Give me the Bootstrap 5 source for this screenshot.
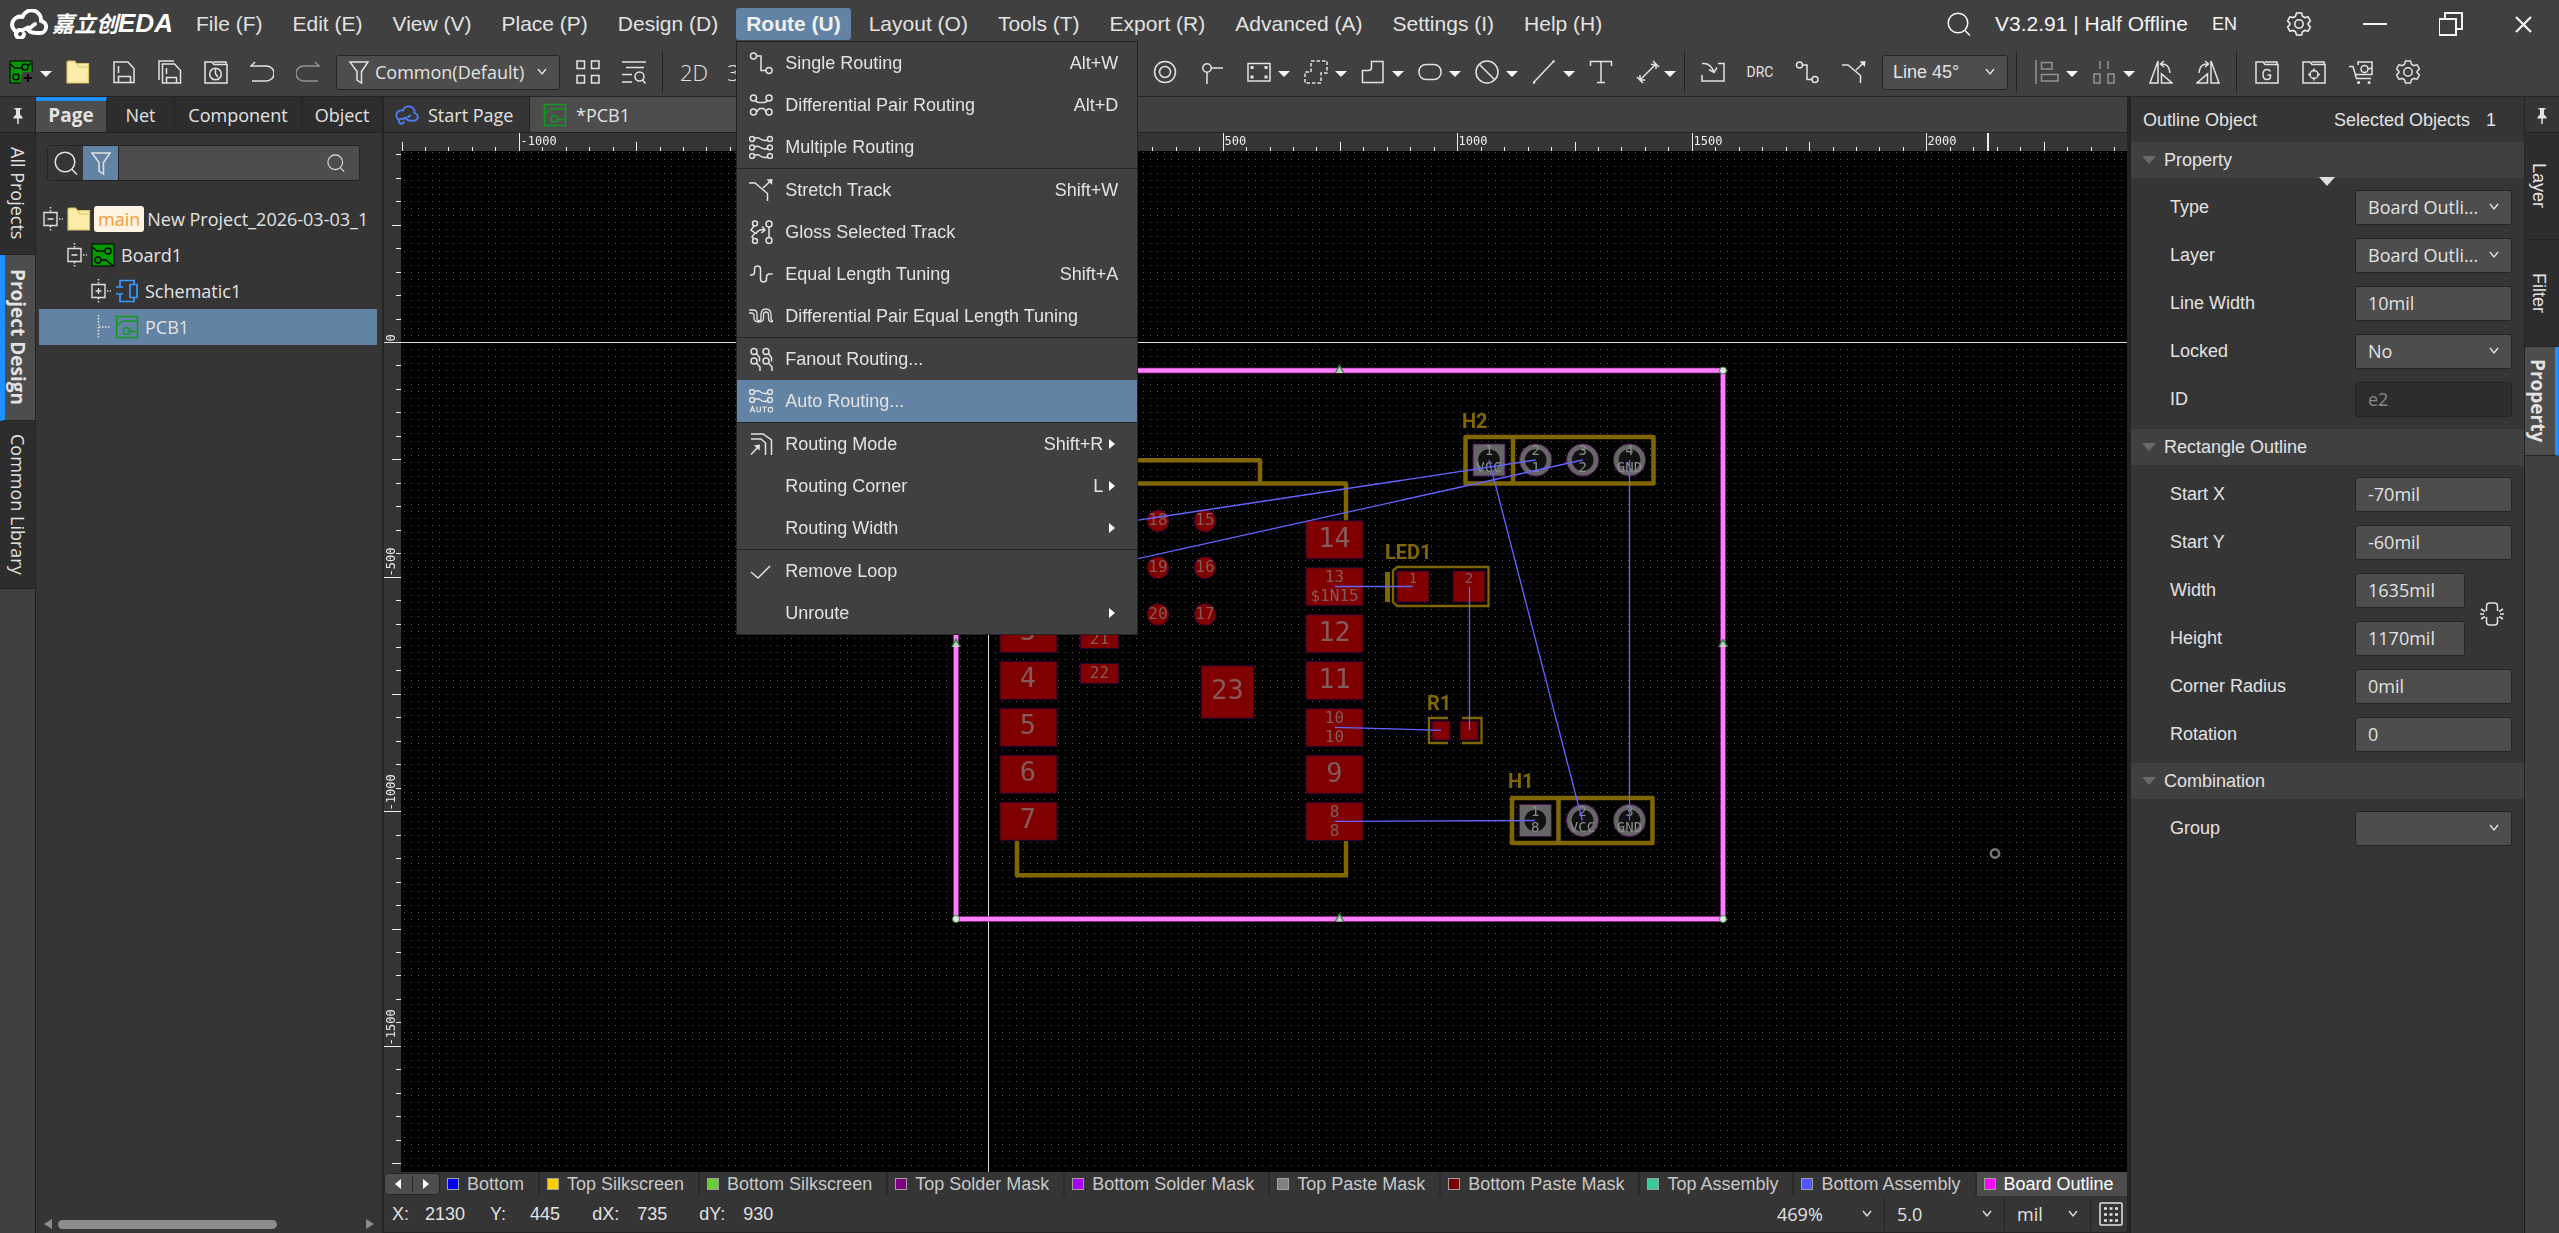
<!DOCTYPE html>
<html lang="en" data-bs-theme="dark">
<head>
<meta charset="utf-8">
<meta name="viewport" content="width=device-width, initial-scale=1">
<title>PCB1 - EDA</title>
<link href="https://cdn.jsdelivr.net/npm/bootstrap@5.3.0/dist/css/bootstrap.min.css" rel="stylesheet">
<script src="https://cdn.jsdelivr.net/npm/bootstrap@5.3.0/dist/js/bootstrap.bundle.min.js"></script>
<style>
:root{--bar:#404040;--panel:#353535;--deep:#2d2d2d;--field:#4d4d4d;--edge:#242424;--ink:#e2e2e2;--hot:#6283a3;--blue:#1e90ff;
  --arial:"Liberation Sans",Arial,sans-serif;--hum:"Open Sans","Noto Sans",sans-serif}
body{height:100vh;overflow:hidden;background:var(--panel);color:var(--ink);font:18px/24px var(--arial)}
button,input,select{font:inherit;color:inherit}
button{background:none;border:0;padding:0}
.hum{font-family:var(--hum)}
.ico{width:24px;height:24px;flex:none;fill:none;stroke:currentColor;stroke-width:1.5;display:block}
.dim{opacity:.5}
/* title bar */
.titlebar{height:48px;background:var(--bar)}
.brand{width:184px;padding-left:10px;color:#fff}
.brand svg{width:38px;height:30px;fill:none;stroke:#fff;stroke-width:4;stroke-linecap:round;stroke-linejoin:round}
.brand span{font:italic 700 22px/30px var(--arial),"Noto Sans CJK SC",sans-serif;margin-left:4px;white-space:nowrap}
.brand b{font-size:26px}
.mainmenu{gap:6px;font-size:21px}
.mainmenu .entry{height:32px;padding:0 12px;border-radius:3px;white-space:nowrap;line-height:32px;display:block}
.mainmenu .entry.on{background:var(--hot);font-weight:700;padding:0 10px;color:#f0f0f0}
.winbar{font-size:21px;color:#f4f4f4}
.winbar .lang{font-size:18px;margin:0 50px 0 24px}
/* route menu */
.routemenu{--bs-dropdown-padding-y:0;top:33px;left:0;width:402px;background:var(--bar);border:1px solid var(--edge);border-radius:0;font-size:18px;color:var(--ink);padding:0}
.routemenu button{height:42px;width:100%;padding:0 19px 0 12px;gap:12px;text-align:left}
.routemenu button.on{background:var(--hot)}
.routemenu hr{margin:0;border-top:1px solid var(--edge);opacity:1}
.routemenu kbd{font:inherit;color:inherit;background:none;padding:0;margin-left:auto}
.sub::after{content:"";border:5px solid transparent;border-left:6px solid #fff;border-right:0;margin:0 3px 0 -6px}
/* toolbar */
.toolbar{height:49px;background:var(--bar);border-bottom:1px solid var(--edge)}
.toolbar .tools-a{width:1153px;padding-left:9px}
.tool{margin-right:23px}
.tools-a .tool{margin-right:22px}
.tool.drop,.tools-a .tool.drop{margin-right:14px;display:flex;align-items:center;gap:7px}
.drop::after{content:"";border:6px solid transparent;border-top:6px solid #f4f4f4;border-bottom:0;margin-top:4px}
.rule{width:1px;height:42px;background:var(--edge);flex:none}
.rule.wide{margin-right:18px}
.pick{appearance:none;background:var(--field) url("data:image/svg+xml,%3Csvg xmlns='http://www.w3.org/2000/svg' width='10' height='8' fill='none' stroke='%23e2e2e2' stroke-width='1.4'%3E%3Cpath d='M1 1l4 5 4-5'/%3E%3C/svg%3E") no-repeat right 12px center;border:1px solid var(--edge);border-radius:3px;height:35px;padding:0 24px 0 10px}
.scope{width:224px}
.corner{width:126px}
.twod{font:300 22px/24px var(--hum);width:24px;margin:0 20px 0 3px;display:flex;justify-content:center}
.drc{font:14px/24px Roboto,sans-serif;width:24px;display:flex;justify-content:center}
/* strips and tabs */
.strip{width:36px;background:var(--bar);border-right:1px solid var(--edge);flex:none}
.strip.right{width:35px;border-right:0;border-left:1px solid var(--edge)}
.pin{height:36px;background:var(--panel);border-bottom:1px solid var(--edge)}
.vtab{writing-mode:vertical-rl;background:var(--deep);border-bottom:1px solid var(--edge);display:flex;align-items:center;justify-content:center;width:100%;white-space:nowrap}
.vtab.on{background:var(--field);font-weight:700;font-size:19px;border-left:5px solid var(--blue);padding-right:5px}
.right .vtab{padding-right:7px}
.right .vtab.on{border-left:0;border-right:4px solid var(--blue);padding-right:5px}
.h-a{height:122px}.h-b{height:166px}.h-c{height:168px}.h-d{height:107px}.h-e{height:109px}
.tabrow{height:36px;border-bottom:1px solid var(--edge);background:var(--bar)}
.ptab{background:var(--deep);border-right:1px solid var(--edge);height:100%;flex:none}
.ptab.on{background:var(--field);border-top:4px solid var(--blue);font-weight:700;font-size:19px;padding-bottom:4px}
.w-a{width:71px}.w-b{width:68px}.w-c{width:127px}
.leftpanel{width:348px;border-right:2px solid var(--edge);flex:none}
.seek{margin:12px 22px 0 11px;height:36px;border:1px solid var(--edge);border-radius:3px;background:var(--field)}
.seek button{width:35px;flex:none;display:grid;place-items:center}
.seek button.go{width:46px}
.seek .go .ico{width:18px;height:18px}
.seek .plain{background:var(--panel)}
.seek .lit{background:var(--hot)}
.seek input{background:none;border:0;border-left:1px solid var(--edge);min-width:0;outline:0}
.tree{margin:20px 5px 0 3px}
.node{height:36px;white-space:nowrap;gap:6px}
.node.on{background:var(--hot)}
.node.n1{padding-left:4px;gap:0}.node.n2{padding-left:28px}.node.n3{padding-left:52px}
.node .exp{margin:0 4px 0 -4px}
.branch{background:#fff3e3;color:#ff9a33;border-radius:3px;height:26px;padding:0 4px;margin:0 3px 0 3px}
.hbar{height:9px;background:#8c8c8c;border-radius:5px;width:219px;margin:0 89px 0 6px}
.tri{border:5px solid transparent;border-right:8px solid #8c8c8c;border-left:0}
.tri.r{border-right:0;border-left:8px solid #8c8c8c}
/* centre */
.doctab{border-right:1px solid var(--edge);height:100%;background:var(--panel);gap:9px;padding:0 11px;width:146px;flex:none}
.doctab.on{background:var(--field);width:260px;padding-left:13px}
.doctab .home{color:#4d7df0;stroke-width:3}
.board,main,.centre{min-height:0;min-width:0}
.board canvas{position:absolute;inset:0}
.board svg{position:relative;display:block;width:100%;height:100%}
.layers{height:24px;overflow:hidden}
.layertab{height:24px;gap:8px;padding:0 14px 0 7px;border-right:2px solid #2a2a2a;color:#c8c8c8;white-space:nowrap}
.layertab i{width:12px;height:12px;border:1px solid #a0a0a0}
.layertab.on{background:var(--field);color:#fff;padding-right:11px;border:0}
.navpair{width:56px;height:22px;border:1px solid var(--edge);border-radius:4px;background:var(--field);flex:none}
.navpair .rule{height:16px}
.status{height:36px;border-bottom:1px solid var(--edge);box-sizing:content-box}
.status dl{margin:0;font-size:18px}
.status dt{font-weight:400}.status dd{margin:0 32px 0 18px}
.status .first{margin:0 25px 0 16px}
.status .second{margin-left:24px}
.status .pick{background-color:transparent;border:0;border-right:1px solid var(--edge);border-radius:0;padding:0 0 0 12px;height:33px;width:120px}
.status .pick.unit{width:86px}
/* property panel */
.props{width:397px;border-left:4px solid var(--edge);flex:none}
.prophead{height:45px;padding:0 28px 0 12px}
.section{height:36px;background:var(--bar);padding-left:11px;gap:8px}
.section::before{content:"";border:7px solid transparent;border-top:8px solid #6a6a6a;border-bottom:0}
.rows{padding:5px 12px 5px 39px}
.rows.first{padding-bottom:6px}
.rowline{height:48px;display:flex;align-items:center;justify-content:space-between}
.rowline .val{width:157px;height:35px;background-color:var(--field);border:1px solid var(--edge);border-radius:3px;padding:0 12px;font-family:var(--hum);outline:0}
.rowline .val:disabled{background-color:var(--deep);color:#8a8a8a;opacity:1}
.pairrow .val{width:110px}
.pairrow .ico{margin:0 8px 0 15px}
.nub{left:188px;top:35px;border:8px solid transparent;border-top:9px solid #ddd;border-bottom:0}
/* board drawing */
.rt{font:12px "DejaVu Sans Mono",monospace;fill:#eee}
.pad{fill:#800000;stroke:#2b0035;stroke-width:1}
.big,.sml,.hol{font-family:"DejaVu Sans Mono",monospace;fill:#845a5a;text-anchor:middle;stroke:none}
.big{font-size:27px}.sml{font-size:16px}.hol{font-size:14px;fill:#8c8c8c}
.sml.mini{font-size:14px}
.silk{fill:none;stroke:#806600;stroke-width:4.5;stroke-linejoin:round;stroke-linecap:round}
.thin{stroke-width:2.3;stroke-linejoin:miter;stroke-linecap:butt}
.ref{font:700 20px Roboto,sans-serif;fill:#806600}
.th{fill:#666;stroke:#48104f;stroke-width:1}.hole{fill:#111}
.rat{stroke:#6464ff;stroke-width:1.3;fill:none}
.axis{stroke:#ddd;shape-rendering:crispEdges}
</style>
</head>
<body class="d-flex flex-column">
<svg width="0" height="0" class="position-absolute" aria-hidden="true">
 <defs>
  <symbol id="boardico" viewBox="0 0 24 24"><path d="M1 1h22v22H1z" fill="#009900" stroke="#000" stroke-width="1"/><path d="M1 4l5 4h8M14 8a3 3 0 1 0 6 0a3 3 0 1 0-6 0M4 17a3 3 0 1 0 6 0a3 3 0 1 0-6 0M10 17l5 0 7 6" stroke="#000" stroke-width="1.4"/></symbol>
  <symbol id="newpcb" viewBox="0 0 24 24"><path d="M1 1h22v22H1z" fill="#009900" stroke="#000" stroke-width="1"/><path d="M1 4l5 4h7M13 7a3 3 0 1 0 6 0a3 3 0 1 0-6 0M22 3l-3 3M4 17a3 3 0 1 0 6 0a3 3 0 1 0-6 0" stroke="#000" stroke-width="1.4"/><path d="M14 12h10v12H12v-6z" fill="#404040" stroke="none"/><path d="M19 14v8M15 18h8" stroke="#000" stroke-width="1.8"/></symbol>
  <symbol id="folder" viewBox="0 0 24 24"><path d="M1 2.500q0-1.500 1.500-1.500h6l2 2.500h12v19.500H1z" fill="#fbecaa" stroke="#dcc469" stroke-width="1.2"/><path d="M11 4l2 3h10" stroke="#dcc469" stroke-width="1.2"/></symbol>
  <symbol id="save" viewBox="0 0 24 24"><path d="M2 2h14l6 6.500V22.500H2zM6.500 6v7M6.500 22v-5.500h12V22"/></symbol>
  <symbol id="saveall" viewBox="0 0 24 24"><path d="M4.500 4h12l6 6.500V23H4.500zM8.500 8v6M8.500 23v-5.500h10V23M1 20V1h15"/></symbol>
  <symbol id="history" viewBox="0 0 24 24"><path d="M1 23V2h7l2 2.500h13V23zM9.500 2H22v2.500"/><circle cx="11.500" cy="14" r="5.800"/><path d="M11.500 9v5l2.500 3"/></symbol>
  <symbol id="undo" viewBox="0 0 24 24"><path d="M5 2L1 6h15.500a7.500 7.500 0 0 1 0 15H2"/></symbol>
  <symbol id="redo" viewBox="0 0 24 24"><path d="M19 2l4 4H7.500a7.500 7.500 0 0 0 0 15H22"/></symbol>
  <symbol id="funnel" viewBox="0 0 24 24"><path d="M3 2h18l-6.500 9.500V23l-4.500-3v-8.500z"/></symbol>
  <symbol id="grid4" viewBox="0 0 24 24"><path d="M1 1h7.500v7.500H1zM15.500 1H23v7.500h-7.500zM1 15.500h7.500V23H1zM15.500 15.500H23V23h-7.500z"/></symbol>
  <symbol id="listfind" viewBox="0 0 24 24"><path d="M0 2h24M4 7.500h18M0 14.500h10M0 22h10"/><circle cx="17.500" cy="16.500" r="4.500"/><path d="M20.500 20l3 3.500"/></symbol>
  <symbol id="target" viewBox="0 0 24 24"><circle cx="12" cy="12" r="10.500"/><circle cx="12" cy="12" r="5.500"/></symbol>
  <symbol id="viapin" viewBox="0 0 24 24"><circle cx="7" cy="8" r="4.200"/><path d="M11.500 8H23M7 12.500V24"/></symbol>
  <symbol id="padrect" viewBox="0 0 24 24"><path d="M1 3.500h22v17.500H1z"/><path d="M5 7.500h.1M19 7.500h.1M5 17h.1M19 17h.1" stroke-width="3" stroke-linecap="square"/></symbol>
  <symbol id="dash" viewBox="0 0 24 24"><path d="M7 1H23v12h-6v10H1V12h6z" stroke-dasharray="3.500 2"/></symbol>
  <symbol id="poly" viewBox="0 0 24 24"><path d="M10.500 1.500H22V22.500H1.500V10.500h6q3 0 3-3z"/></symbol>
  <symbol id="oval" viewBox="0 0 24 24"><rect x="1" y="4.500" width="22" height="15" rx="7"/></symbol>
  <symbol id="forbid" viewBox="0 0 24 24"><circle cx="12" cy="12" r="11"/><path d="M4.500 4.500l15 15"/></symbol>
  <symbol id="line" viewBox="0 0 24 24"><path d="M2 22L21 2"/><path d="M2 22.500h.1M21.500 1.500h.1" stroke-width="2.500" stroke-linecap="round"/></symbol>
  <symbol id="text" viewBox="0 0 24 24"><path d="M1.500 6V1.500h21V6M12 1.500v21M8 22.500h8"/></symbol>
  <symbol id="dimen" viewBox="0 0 24 24"><path d="M4 20L20 4M17 1l6 6M1 17l6 6M15 4.500h5V9M4 15v5h5"/></symbol>
  <symbol id="import" viewBox="0 0 24 24"><path d="M1 15v6h22V3.500h-6M1 3.500q9-1 12 9M8 9.500l5 3 3-5"/></symbol>
  <symbol id="single" viewBox="0 0 24 24"><circle cx="4.500" cy="5" r="3"/><circle cx="20" cy="19.500" r="3"/><path d="M7.500 5H12v14.500h5"/></symbol>
  <symbol id="stretch" viewBox="0 0 24 24"><path d="M0 5h6l12.500 10.500V23M14 10l8.500-8"/><path d="M17.500 1.500L23.500 1l-.5 6z" fill="currentColor" stroke="none"/></symbol>
  <symbol id="align" viewBox="0 0 24 24"><path d="M1 0v24M6.500 2.500h10.500v6.500H6.500zM6.500 14.500H23V21H6.500z"/></symbol>
  <symbol id="distr" viewBox="0 0 24 24"><path d="M8 1v8M16 1v8M2 14h6v9H2zM16 14h6v9h-6z"/></symbol>
  <symbol id="mirl" viewBox="0 0 24 24"><path d="M9 1v22H1zM12.500 14v9H23zM12 4q8-1 9 9M15 1l-3.500 3L15 7"/></symbol>
  <symbol id="mirr" viewBox="0 0 24 24"><path d="M15 1v22h8zM11.500 14v9H1zM12 4q-8-1-9 9M9 1l3.500 3L9 7"/></symbol>
  <symbol id="gfold" viewBox="0 0 24 24"><path d="M1 23V2h7l2 2.500h13V23zM9.500 2H22v2.500M15.500 11.500q-1-2-3.500-2-4 0-4 5t4 5q3.500 0 3.500-3v-1.500h-3"/></symbol>
  <symbol id="sfold" viewBox="0 0 24 24"><path d="M1 23V2h7l2 2.500h13V23zM9.500 2H22v2.500"/><circle cx="12" cy="14.500" r="4"/><path d="M12 8.500v3M12 17.500v3M6 14.500h3M15 14.500h3"/></symbol>
  <symbol id="cart" viewBox="0 0 24 24"><path d="M0 6.500h4l3.500 12H22M6 14.500h17V2H9v3M23 2v13"/><circle cx="15.500" cy="9" r="3.500"/><path d="M19 8.500h4"/><path d="M9.500 22.500h.1M20 22.500h.1" stroke-width="3" stroke-linecap="round"/></symbol>
  <symbol id="gear" viewBox="0 0 24 24"><path d="M9.500 1h5l1 3.200 2.400 1.400 3.200-.8 2.300 4.200-2.300 2.400v1.200l2.300 2.400-2.300 4.200-3.200-.8-2.400 1.400-1 3.200h-5l-1-3.200-2.400-1.400-3.200.8L.6 15l2.300-2.400v-1.200L.6 9l2.300-4.200 3.200.8 2.400-1.400z"/><circle cx="12" cy="12" r="4.200"/></symbol>
  <symbol id="find" viewBox="0 0 24 24"><circle cx="11" cy="11" r="9.800"/><path d="M18 18.500l5 5"/></symbol>
  <symbol id="pin" viewBox="0 0 24 24"><path d="M8.500 5h7v1.500h-1.500v5l2.500 2.500v1.500h-9V14l2.500-2.500v-5H8.500z" fill="currentColor" stroke="none"/><path d="M12 15v6"/></symbol>
  <symbol id="expo" viewBox="0 0 24 24"><path d="M5 5.500h13v13H5zM8.500 12h6" stroke-width="1.400"/><path d="M11.500 0v5M11.500 19v5M20 12h4" stroke-dasharray="1.500 1.500"/></symbol>
  <symbol id="expc" viewBox="0 0 24 24"><path d="M5 5.500h13v13H5zM8.500 12h6M11.500 9v6" stroke-width="1.400"/><path d="M11.500 0v5M11.500 19v5M20 12h4" stroke-dasharray="1.500 1.500"/></symbol>
  <symbol id="leaf" viewBox="0 0 24 24"><path d="M11.500 0v24M12 12h12" stroke-dasharray="1.500 1.500"/></symbol>
  <symbol id="sch" viewBox="0 0 24 24"><path d="M5 8V1.500h14v3.500M5 15v7.500h14V19M1 8h7M1 15h7M15 5.500h7v13h-7z" stroke="#3a9bff" stroke-width="1.700"/></symbol>
  <symbol id="pcb" viewBox="0 0 24 24"><path d="M1.500 1.500h21v21h-21zM1.500 11l6.500-5h14.500M15 16.500h7.500" stroke="#119922"/><circle cx="11.500" cy="16" r="3.300" stroke="#119922"/></symbol>
  <symbol id="cloud" viewBox="0 0 38 30"><path d="M14 25a4 4 0 1 1-2-3.500l6-3M26 24h3a6 6 0 0 0 2-12A9.500 9.500 0 0 0 12.500 8 8 8 0 0 0 7 23M20 19l5-4M17 19q2 5 9 5"/></symbol>
  <symbol id="diffp" viewBox="0 0 24 24"><circle cx="4.500" cy="5" r="3"/><circle cx="20" cy="5" r="3"/><circle cx="4.500" cy="19" r="3"/><circle cx="20" cy="19" r="3"/><path d="M6 7.500q2 2 4 2h5q2 0 3.500-2M7.500 19l3-3.500h4l3 3.500"/></symbol>
  <symbol id="multi" viewBox="0 0 24 24"><g id="mrow"><circle cx="3" cy="4" r="2.500"/><circle cx="21" cy="4" r="2.500"/><path d="M5.500 4q2.500-2.500 6 0t7 1"/></g><use href="#mrow" y="8.500"/><use href="#mrow" y="17"/></symbol>
  <symbol id="auto" viewBox="0 0 24 24"><g transform="translate(0,-1)"><use href="#mrow"/><use href="#mrow" y="8"/></g><path d="M1 23.500l2.500-6 2.500 6M2 21.500h3M8 17.500v4q0 1.500 1.700 1.500t1.700-1.500v-4M13 18h5M15.500 18v5.500" stroke-width="1.200"/><circle cx="21.500" cy="20.700" r="2.300" stroke-width="1.200"/></symbol>
  <symbol id="gloss" viewBox="0 0 24 24"><circle cx="6" cy="3.500" r="2.500"/><circle cx="6" cy="21" r="2.500"/><circle cx="20" cy="4" r="3"/><circle cx="20" cy="20.500" r="3"/><path d="M20 7v10.500M5 6l-3 4 4 3-3 4 2 2M7 14q2-5 8-4M13 6.500l3 3.500-3.500 3"/></symbol>
  <symbol id="equal" viewBox="0 0 24 24"><path d="M1 13h1.500q3 0 3-3V7q0-3 3-3t3 3v10q0 3 3 3t3-3v-2q0-3 3-3h3"/></symbol>
  <symbol id="deq" viewBox="0 0 24 24"><path d="M0 6h4q4 0 4 4v4q0 3 2 3t2-3v-3q0-6 5-6t5 6v3q0 3 2 3M0 9h2q3 0 3 3v2q0 4 5 4 4.500 0 4.500-4v-3q0-3 2.500-3t2.500 3v3q0 4 4 4" stroke-width="1.300"/></symbol>
  <symbol id="fan" viewBox="0 0 24 24"><circle cx="5" cy="4.500" r="3"/><circle cx="17" cy="4.500" r="3"/><circle cx="5" cy="14" r="3"/><circle cx="17" cy="14" r="3"/><path d="M7.500 6.500l3 4v4M19.500 6.500l3 4v4M7.500 16l3.500 4v4M19.500 16l3.500 4v4"/></symbol>
  <symbol id="rmode" viewBox="0 0 24 24"><path d="M2 2h12l8.500 6v15M2 7h10l4.500 4v12M2 22.500l7.500-8"/><path d="M5 13.500l6-1-.5 6z" fill="currentColor" stroke="none"/></symbol>
  <symbol id="tick" viewBox="0 0 24 24"><path d="M2 13l7 6L21 7"/></symbol>
  <symbol id="unlink" viewBox="0 0 24 24"><path d="M6.500 9V4q0-3 3-3h5q3 0 3 3v5M6.500 15v5q0 3 3 3h5q3 0 3-3v-5M0 12h4M20 12h4M1 7l4 2.500M23 7l-4 2.500M1 17l4-2.500M23 17l-4-2.500"/></symbol>
 </defs>
</svg>

<header class="titlebar d-flex align-items-center">
 <div class="brand d-flex align-items-center flex-shrink-0"><svg aria-hidden="true"><use href="#cloud"/></svg><span>嘉立创<b>EDA</b></span></div>
 <nav class="mainmenu d-flex" aria-label="Main menu">
  <button class="entry">File (F)</button><button class="entry">Edit (E)</button><button class="entry">View (V)</button><button class="entry">Place (P)</button><button class="entry">Design (D)</button>
  <div class="position-relative">
   <button class="entry on" aria-expanded="true">Route (U)</button>
   <div class="dropdown-menu show routemenu">
    <button class="d-flex align-items-center"><svg class="ico"><use href="#single"/></svg>Single Routing<kbd>Alt+W</kbd></button>
    <button class="d-flex align-items-center"><svg class="ico"><use href="#diffp"/></svg>Differential Pair Routing<kbd>Alt+D</kbd></button>
    <button class="d-flex align-items-center"><svg class="ico"><use href="#multi"/></svg>Multiple Routing</button>
    <hr>
    <button class="d-flex align-items-center"><svg class="ico"><use href="#stretch"/></svg>Stretch Track<kbd>Shift+W</kbd></button>
    <button class="d-flex align-items-center"><svg class="ico"><use href="#gloss"/></svg>Gloss Selected Track</button>
    <button class="d-flex align-items-center"><svg class="ico"><use href="#equal"/></svg>Equal Length Tuning<kbd>Shift+A</kbd></button>
    <button class="d-flex align-items-center"><svg class="ico"><use href="#deq"/></svg>Differential Pair Equal Length Tuning</button>
    <hr>
    <button class="d-flex align-items-center"><svg class="ico"><use href="#fan"/></svg>Fanout Routing...</button>
    <button class="on d-flex align-items-center"><svg class="ico"><use href="#auto"/></svg>Auto Routing...</button>
    <hr>
    <button class="sub d-flex align-items-center"><svg class="ico"><use href="#rmode"/></svg>Routing Mode<kbd>Shift+R</kbd></button>
    <button class="sub d-flex align-items-center"><svg class="ico"></svg>Routing Corner<kbd>L</kbd></button>
    <button class="sub d-flex align-items-center"><svg class="ico"></svg>Routing Width<kbd></kbd></button>
    <hr>
    <button class="d-flex align-items-center"><svg class="ico"><use href="#tick"/></svg>Remove Loop</button>
    <button class="sub d-flex align-items-center"><svg class="ico"></svg>Unroute<kbd></kbd></button>
   </div>
  </div>
  <button class="entry">Layout (O)</button><button class="entry">Tools (T)</button><button class="entry">Export (R)</button><button class="entry">Advanced (A)</button><button class="entry">Settings (I)</button><button class="entry">Help (H)</button>
 </nav>
 <div class="winbar d-flex align-items-center ms-auto pe-4">
  <button class="me-4" aria-label="Search"><svg class="ico"><use href="#find"/></svg></button>
  <span>V3.2.91 | Half Offline</span><span class="lang">EN</span>
  <div class="d-flex gap-5 align-items-center">
   <button aria-label="Preferences"><svg class="ico" stroke-width="2"><use href="#gear"/></svg></button>
   <button aria-label="Minimize" class="ps-1"><svg class="ico" viewBox="0 0 24 24"><path d="M-2 12h28" stroke-width="2"/></svg></button>
   <button aria-label="Restore" class="ps-1"><svg class="ico" viewBox="0 0 24 24"><path d="M0 7h17v16H0zM6 7V1h17v16h-6" stroke-width="2"/></svg></button>
   <button aria-label="Close"><svg class="ico" viewBox="0 0 24 24"><path d="M5 5l15 15M20 5L5 20" stroke-width="2.200"/></svg></button>
  </div>
 </div>
</header>

<div class="toolbar d-flex align-items-center" role="toolbar" aria-label="Tools">
 <div class="tools-a d-flex align-items-center flex-shrink-0">
  <button class="tool drop" aria-label="New"><svg class="ico"><use href="#newpcb"/></svg></button>
  <button class="tool" aria-label="Open"><svg class="ico"><use href="#folder"/></svg></button>
  <button class="tool" aria-label="Save"><svg class="ico"><use href="#save"/></svg></button>
  <button class="tool" aria-label="Save all"><svg class="ico"><use href="#saveall"/></svg></button>
  <button class="tool" aria-label="History"><svg class="ico"><use href="#history"/></svg></button>
  <button class="tool" aria-label="Undo"><svg class="ico"><use href="#undo"/></svg></button>
  <button class="dim me-3" aria-label="Redo"><svg class="ico"><use href="#redo"/></svg></button>
  <button class="pick scope hum d-flex align-items-center me-3"><svg class="ico me-1"><use href="#funnel"/></svg>Common(Default)</button>
  <button class="tool" aria-label="Grid view"><svg class="ico"><use href="#grid4"/></svg></button>
  <button class="me-3" aria-label="Find in list"><svg class="ico"><use href="#listfind"/></svg></button>
  <span class="rule me-3"></span>
  <button class="twod">2D</button><button class="twod">3D</button>
 </div>
 <button class="tool" aria-label="Via"><svg class="ico"><use href="#target"/></svg></button>
 <button class="tool" aria-label="Pin"><svg class="ico"><use href="#viapin"/></svg></button>
 <button class="tool drop" aria-label="Pad"><svg class="ico"><use href="#padrect"/></svg></button>
 <button class="tool drop" aria-label="Region"><svg class="ico"><use href="#dash"/></svg></button>
 <button class="tool drop" aria-label="Outline"><svg class="ico"><use href="#poly"/></svg></button>
 <button class="tool drop" aria-label="Slot"><svg class="ico"><use href="#oval"/></svg></button>
 <button class="tool drop" aria-label="Prohibited region"><svg class="ico"><use href="#forbid"/></svg></button>
 <button class="tool drop" aria-label="Line"><svg class="ico"><use href="#line"/></svg></button>
 <button class="tool" aria-label="Text"><svg class="ico"><use href="#text"/></svg></button>
 <button class="drop d-flex align-items-center gap-1 me-2" aria-label="Dimension"><svg class="ico"><use href="#dimen"/></svg></button>
 <span class="rule me-3"></span>
 <button class="tool" aria-label="Import changes"><svg class="ico"><use href="#import"/></svg></button>
 <button class="tool drc">DRC</button>
 <button class="tool" aria-label="Single routing"><svg class="ico"><use href="#single"/></svg></button>
 <button class="me-3" aria-label="Stretch track"><svg class="ico"><use href="#stretch"/></svg></button>
 <select class="pick corner me-2" aria-label="Corner mode"><option>Line 45°</option></select>
 <span class="rule wide"></span>
 <button class="tool drop" aria-label="Align"><svg class="ico dim"><use href="#align"/></svg></button>
 <button class="tool drop" aria-label="Distribute"><svg class="ico dim"><use href="#distr"/></svg></button>
 <button class="tool" aria-label="Flip left"><svg class="ico"><use href="#mirl"/></svg></button>
 <button class="me-3" aria-label="Flip right"><svg class="ico"><use href="#mirr"/></svg></button>
 <span class="rule wide"></span>
 <button class="tool" aria-label="Gerber"><svg class="ico"><use href="#gfold"/></svg></button>
 <button class="tool" aria-label="Pick and place"><svg class="ico"><use href="#sfold"/></svg></button>
 <button class="tool" aria-label="Order"><svg class="ico"><use href="#cart"/></svg></button>
 <button class="tool" aria-label="Settings"><svg class="ico"><use href="#gear"/></svg></button>
</div>

<main class="d-flex flex-grow-1">
 <div class="strip d-flex flex-column hum">
  <button class="pin d-grid justify-content-center align-content-center" aria-label="Pin panel"><svg class="ico"><use href="#pin"/></svg></button>
  <button class="vtab h-a">All Projects</button><button class="vtab on h-b">Project Design</button><button class="vtab h-c">Common Library</button>
 </div>
 <aside class="leftpanel d-flex flex-column hum">
  <div class="tabrow d-flex">
   <button class="ptab on w-a">Page</button><button class="ptab w-b">Net</button><button class="ptab w-c">Component</button><button class="ptab flex-fill border-end-0">Object</button>
  </div>
  <div class="seek d-flex">
   <button class="plain" aria-label="Search"><svg class="ico"><use href="#find"/></svg></button>
   <button class="lit" aria-label="Filter"><svg class="ico"><use href="#funnel"/></svg></button>
   <input type="text" class="flex-fill" aria-label="Filter text">
   <button class="go" aria-label="Find"><svg class="ico"><use href="#find"/></svg></button>
  </div>
  <div class="tree">
   <div class="node n1 d-flex align-items-center overflow-hidden"><svg class="ico exp"><use href="#expo"/></svg><svg class="ico"><use href="#folder"/></svg><span class="branch d-flex align-items-center">main</span>New Project_2026-03-03_1</div>
   <div class="node n2 d-flex align-items-center"><span class="d-flex"><svg class="ico exp"><use href="#expo"/></svg><svg class="ico"><use href="#boardico"/></svg></span>Board1</div>
   <div class="node n3 d-flex align-items-center"><span class="d-flex"><svg class="ico exp"><use href="#expc"/></svg><svg class="ico"><use href="#sch"/></svg></span>Schematic1</div>
   <div class="node n3 on d-flex align-items-center"><span class="d-flex"><svg class="ico exp"><use href="#leaf"/></svg><svg class="ico"><use href="#pcb"/></svg></span>PCB1</div>
  </div>
  <div class="mt-auto d-flex align-items-center mb-1 ps-2"><i class="tri"></i><div class="hbar"></div><i class="tri r"></i></div>
 </aside>

 <section class="centre d-flex flex-column flex-grow-1">
  <div class="tabrow d-flex hum">
   <button class="doctab d-flex align-items-center text-nowrap"><svg class="ico home"><use href="#cloud"/></svg>Start Page</button>
   <button class="doctab on d-flex align-items-center"><svg class="ico"><use href="#pcb"/></svg>*PCB1</button>
  </div>
  <div class="board position-relative flex-grow-1 overflow-hidden">
   <canvas id="dots"></canvas>
   <svg aria-label="PCB1">
    <rect width="100%" height="18" fill="#353535"/><rect width="17" height="100%" fill="#353535"/>
    <g transform="translate(-384,-133)">
     <g id="ruler"></g>
     <path class="axis" d="M384 342.500H4000M988.500 151V3000"/>
     <path d="M1988 133v18" stroke="#eee" stroke-width="2"/>
     <g class="silk"><path d="M1100 460.200H1260V483.500M1017 519V483.500H1346V519M1017 842V875.300H1346V842"/>
      <path d="M1465.500 437h188v46.500h-188zM1513 437v46.500M1512 798h140.500v45H1512zM1558.500 798v45"/>
      <path class="thin" d="M1397 567h91.500v39H1397l-4-4v-31zM1448 718h-19v25h19M1462 718h19.500v25H1462"/></g>
     <path d="M1387.500 572v30" stroke="#806600" stroke-width="5"/>
     <g id="pads"></g>
     <g class="pad"><rect x="1397" y="571" width="32" height="31"/><rect x="1453" y="571" width="32" height="31"/><rect x="1432" y="721" width="18" height="19"/><rect x="1460" y="721" width="18" height="19"/></g>
     <text class="sml mini" x="1413" y="583">1</text><text class="sml mini" x="1469" y="583">2</text>
     <text class="ref" x="1462" y="428">H2</text><text class="ref" x="1385" y="559">LED1</text><text class="ref" x="1427" y="710">R1</text><text class="ref" x="1508" y="788">H1</text>
     <path class="rat" d="M1535.700 460L1080 529M1582.700 460L1080 571.500M1489 460L1582.300 820.500M1629.500 460V820.500M1335 821.300L1535 820.500M1335 586.500H1412.700M1469.500 587V730M1335 727.300L1441 730.300"/>
     <rect x="956" y="370.500" width="767" height="548.500" fill="none" stroke="#b030b0" stroke-width="5.500"/>
     <rect x="956" y="370.500" width="767" height="548.500" fill="none" stroke="#ff80ff" stroke-width="4"/>
     <g fill="#e6e6e6" stroke="#2a8a3a"><circle cx="1723" cy="370.500" r="3.500"/><circle cx="956" cy="919" r="3.500"/><circle cx="1723" cy="919" r="3.500"/></g>
     <g fill="#2a8a3a"><path id="hd" d="M1339.500 364l5 9h-10z"/><use href="#hd" y="548.500"/><use href="#hd" x="-383.500" y="274"/><use href="#hd" x="383.500" y="274"/></g>
     <g fill="#ccc"><path id="hw" d="M1339.500 367l3.500 6h-7z"/><use href="#hw" y="548.500"/><use href="#hw" x="-383.500" y="274"/><use href="#hw" x="383.500" y="274"/></g>
     <circle cx="1995" cy="853.500" r="4.200" fill="none" stroke="#777" stroke-width="2.500"/>
    </g>
   </svg>
  </div>
  <div class="layers d-flex align-items-center" id="layers">
   <div class="navpair d-flex align-items-center justify-content-evenly"><button aria-label="Previous layers"><svg width="6" height="10" class="d-block"><path d="M6 0v10L0 5z" fill="#fff"/></svg></button><span class="rule"></span><button aria-label="Next layers"><svg width="6" height="10" class="d-block"><path d="M0 0v10l6-5z" fill="#fff"/></svg></button></div>
   <button class="layertab d-flex align-items-center"><i style="background:#0000ff"></i>Bottom</button>
   <button class="layertab d-flex align-items-center"><i style="background:#ffcc00"></i>Top Silkscreen</button>
   <button class="layertab d-flex align-items-center"><i style="background:#66cc33"></i>Bottom Silkscreen</button>
   <button class="layertab d-flex align-items-center"><i style="background:#800080"></i>Top Solder Mask</button>
   <button class="layertab d-flex align-items-center"><i style="background:#aa00ff"></i>Bottom Solder Mask</button>
   <button class="layertab d-flex align-items-center"><i style="background:#808080"></i>Top Paste Mask</button>
   <button class="layertab d-flex align-items-center"><i style="background:#800000"></i>Bottom Paste Mask</button>
   <button class="layertab d-flex align-items-center"><i style="background:#33cc99"></i>Top Assembly</button>
   <button class="layertab d-flex align-items-center"><i style="background:#5555ff"></i>Bottom Assembly</button>
   <button class="layertab on d-flex align-items-center flex-fill"><i style="background:#ff00ff"></i>Board Outline</button>
  </div>
  <div class="status d-flex align-items-center">
   <dl class="d-flex ps-2"><dt>X:</dt><dd class="first">2130</dd><dt>Y:</dt><dd class="second">445</dd><dt>dX:</dt><dd>735</dd><dt>dY:</dt><dd>930</dd></dl>
   <div class="ms-auto d-flex align-items-center hum">
    <select class="pick" aria-label="Zoom"><option>469%</option></select>
    <select class="pick" aria-label="Grid size"><option>5.0</option></select>
    <select class="pick unit" aria-label="Unit"><option>mil</option></select>
    <button class="ms-2 me-1" aria-label="Grid options"><svg class="ico" viewBox="0 0 24 24"><rect x="1" y="1" width="22" height="22" rx="1"/><path d="M5 6.500h14M5 12.500h14M5 18.500h14" stroke-width="2.500" stroke-dasharray="3 2.500"/></svg></button>
   </div>
  </div>
 </section>

 <aside class="props">
  <div class="prophead d-flex align-items-center justify-content-between"><span>Outline Object</span><span>Selected Objects<span class="ms-3">1</span></span></div>
  <div class="section d-flex align-items-center position-relative">Property<i class="nub position-absolute"></i></div>
  <div class="rows first">
   <div class="rowline"><label for="f1">Type</label><select id="f1" class="pick val"><option>Board Outli...</option></select></div>
   <div class="rowline"><label for="f2">Layer</label><select id="f2" class="pick val"><option>Board Outli...</option></select></div>
   <div class="rowline"><label for="f3">Line Width</label><input id="f3" class="val" value="10mil"></div>
   <div class="rowline"><label for="f4">Locked</label><select id="f4" class="pick val"><option>No</option></select></div>
   <div class="rowline"><label for="f5">ID</label><input id="f5" class="val" value="e2" disabled></div>
  </div>
  <div class="section d-flex align-items-center">Rectangle Outline</div>
  <div class="rows">
   <div class="rowline"><label for="g1">Start X</label><input id="g1" class="val" value="-70mil"></div>
   <div class="rowline"><label for="g2">Start Y</label><input id="g2" class="val" value="-60mil"></div>
   <div class="pairrow d-flex align-items-center">
    <div class="flex-grow-1">
     <div class="rowline"><label for="g3">Width</label><input id="g3" class="val" value="1635mil"></div>
     <div class="rowline"><label for="g4">Height</label><input id="g4" class="val" value="1170mil"></div>
    </div>
    <button aria-label="Lock ratio"><svg class="ico"><use href="#unlink"/></svg></button>
   </div>
   <div class="rowline"><label for="g5">Corner Radius</label><input id="g5" class="val" value="0mil"></div>
   <div class="rowline"><label for="g6">Rotation</label><input id="g6" class="val" value="0"></div>
  </div>
  <div class="section d-flex align-items-center">Combination</div>
  <div class="rows"><div class="rowline"><label for="h1">Group</label><select id="h1" class="pick val"><option></option></select></div></div>
 </aside>
 <div class="strip right d-flex flex-column">
  <button class="pin d-grid justify-content-center align-content-center" aria-label="Pin panel"><svg class="ico"><use href="#pin"/></svg></button>
  <button class="vtab h-d">Layer</button><button class="vtab h-d">Filter</button><button class="vtab on hum h-e">Property</button>
 </div>
</main>
<script>
(function(){
 // Origin of the board and its scale (pixels per mil).
 var ox=988.5, oy=342.5, k=0.4692, left=384, top=133;
 var board=document.querySelector('.board'), W=board.clientWidth, H=board.clientHeight;
 // Grid dots, one every 15 mil.
 var c=document.getElementById('dots'); c.width=W; c.height=H;
 var g=c.getContext('2d'); g.fillStyle='#000'; g.fillRect(0,0,W,H); g.fillStyle='#565656';
 var p=15*k, x, y, x0=ox-left, y0=oy-top;
 for(x=x0-Math.floor((x0-18)/p)*p; x<W; x+=p) for(y=y0-Math.floor((y0-19)/p)*p; y<H; y+=p) g.fillRect(Math.floor(x),Math.floor(y),1,1);
 // Rulers.
 var s='', i, v, d='';
 for(i=-25;i<=60;i++){ v=Math.floor(ox+i*50*k)+.5; if(v<401||v>left+W) continue;
  d+='M'+v+' 151V'+(i%10===0?133:i%5===0?142:147);
  if(i%10===0&&i) s+='<text class="rt" x="'+(v+1)+'" y="145">'+i*50+'</text>'; }
 for(i=-12;i<=40;i++){ v=Math.floor(oy+i*50*k)+.5; if(v<153||v>top+H) continue;
  d+='M401 '+v+'H'+(i%10===0?384:i%5===0?392:396);
  if(i%10===0) s+='<text class="rt" transform="translate(395,'+(v-1)+') rotate(-90)">'+(-i*50)+'</text>'; }
 document.getElementById('ruler').innerHTML='<path d="'+d+'" stroke="#eee"/>'+s;
 // Pads.
 var o='', n;
 function rect(cx,cy,w,h){return '<rect class="pad" x="'+(cx-w/2)+'" y="'+(cy-h/2)+'" width="'+w+'" height="'+h+'"/>';}
 function txt(cls,x,y,t){return '<text class="'+cls+'" x="'+x+'" y="'+y+'">'+t+'</text>';}
 for(n=3;n<=7;n++){ y=680.4+(n-4)*46.95; o+=rect(1028.5,y,57,38)+txt('big',1028,y+7,n); }
 for(n=8;n<=14;n++){ y=539.8+(14-n)*46.95; o+=rect(1334.5,y,57,38);
  var two={13:'$1N15',10:'10',8:'8'}[n];
  o+= two? txt('sml',1334.5,y-5,n)+txt('sml',1334.5,y+14,two) : txt('big',1334.5,y+7,n); }
 for(n=0;n<6;n++){ x=n<3?1205:1158; y=520.9+(n%3)*46.8; o+='<circle class="pad" cx="'+x+'" cy="'+y+'" r="11"/>'+txt('sml',x,y+4.5,15+n); }
 o+=rect(1099.5,638.5,38.5,20)+txt('sml',1099.5,643.5,21)+rect(1099.5,673.5,38.5,20)+txt('sml',1099.5,678,22);
 o+=rect(1227.5,692,52.5,52.5)+txt('big',1227.5,699,23);
 function pin(x,y,sq,a,b){ return (sq?'<rect class="th" x="'+(x-16)+'" y="'+(y-16)+'" width="32" height="32"/>':'<circle class="th" cx="'+x+'" cy="'+y+'" r="16.200"/>')+'<circle class="hole" cx="'+x+'" cy="'+y+'" r="10.800"/>'+txt('hol',x,y-5,a)+txt('hol',x,y+11.5,b); }
 o+=pin(1489,460,1,1,'VCC')+pin(1535.7,460,0,2,1)+pin(1582.7,460,0,3,2)+pin(1629.5,460,0,4,'GND');
 o+=pin(1535.3,820.5,1,1,8)+pin(1582.5,820.5,0,2,'VCC')+pin(1629.5,820.5,0,3,'GND');
 document.getElementById('pads').innerHTML=o;
})();
</script>
</body>
</html>
